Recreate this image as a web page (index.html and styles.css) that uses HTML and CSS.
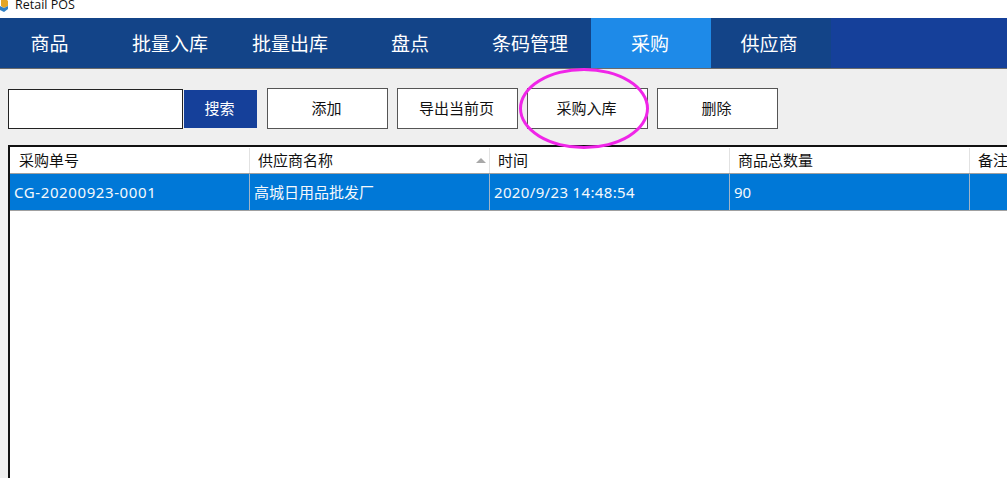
FILE: index.html
```html
<!DOCTYPE html>
<html lang="zh-CN">
<head>
<meta charset="utf-8">
<title>Retail POS</title>
<link rel="stylesheet" href="styles.css">
</head>
<body>
<div class="titlebar">
  <svg class="appicon" width="9" height="12" viewBox="0 0 9 12"><path d="M1 0h6l1 1v5l-4 2-3-2z" fill="#e3a526"/><path d="M0 6l4 2 4-2v3l-4 3-4-2z" fill="#2f7fc4"/></svg>
  <span class="apptitle">Retail POS</span>
</div>
<nav class="nav">
  <a class="tab tab-first">商品</a>
  <a class="tab">批量入库</a>
  <a class="tab">批量出库</a>
  <a class="tab">盘点</a>
  <a class="tab">条码管理</a>
  <a class="tab active">采购</a>
  <a class="tab">供应商</a>
</nav>
<main class="page">
  <div class="toolbar">
    <div class="search">
      <input class="search-input" type="text" aria-label="搜索">
      <button class="search-btn">搜索</button>
    </div>
    <button class="btn">添加</button>
    <button class="btn">导出当前页</button>
    <button class="btn">采购入库</button>
    <button class="btn">删除</button>
  </div>
  <div class="annotation"></div>
  <div class="table">
    <div class="row head">
      <div class="cell cell-first">采购单号</div>
      <div class="cell">供应商名称<span class="sort"></span></div>
      <div class="cell">时间</div>
      <div class="cell">商品总数量</div>
      <div class="cell">备注</div>
    </div>
    <div class="row selected">
      <div class="cell code">CG-20200923-0001</div>
      <div class="cell">高城日用品批发厂</div>
      <div class="cell time">2020/9/23 14:48:54</div>
      <div class="cell">90</div>
      <div class="cell"></div>
    </div>
  </div>
</main>
</body>
</html>
```
FILE: styles.css
```css
* { box-sizing: border-box; }
html, body { margin: 0; height: 100%; overflow: hidden; }
body {
  width: 1007px;
  height: 478px;
  display: flex;
  flex-direction: column;
  background: #efefef;
  font-family: "Noto Sans CJK SC", "Noto Sans", sans-serif;
  color: #111;
}
.titlebar {
  height: 18px;
  flex: none;
  background: #fff;
  display: flex;
  align-items: flex-start;
  overflow: hidden;
}
.appicon { flex: none; margin-right: 6px; }
.apptitle {
  font-family: "Open Sans", sans-serif;
  font-size: 12.5px;
  line-height: 12px;
  margin-top: -1px;
}
.nav {
  height: 51px;
  flex: none;
  display: flex;
  background: #15409a;
  border-bottom: 1px solid #6b6b6b;
}
.tab {
  width: 120px;
  height: 50px;
  padding-right: 2px;
  background: #134488;
  color: #fff;
  font-size: 19px;
  line-height: 50px;
  text-align: center;
}
.tab-first { width: 111px; padding-right: 12px; }
.tab:last-child { padding-right: 4px; }
.tab.active { background: #1e8ae8; }
.page {
  flex: 1;
  position: relative;
  padding: 19px 0 0 8px;
  display: flex;
  flex-direction: column;
  min-height: 0;
}
.toolbar { display: flex; align-items: flex-start; gap: 9px; height: 41px; }
.search { display: flex; align-items: center; height: 41px; margin-right: 1px; }
.search-input {
  width: 175px;
  height: 40px;
  border: 1px solid #222;
  background: #fff;
  border-radius: 0;
  padding: 0;
  outline: none;
}
.search-btn {
  width: 73px;
  height: 38px;
  margin-left: 1px;
  border: 0;
  background: #15409a;
  color: #fff;
  font: 15px/34px "Noto Sans CJK SC", sans-serif;
  padding: 0 2px 2px 0;
}
.btn {
  width: 121px;
  height: 41px;
  border: 1px solid #555;
  background: #fff;
  color: #111;
  font: 15px/35px "Noto Sans CJK SC", sans-serif;
  padding: 0 2px 2px 0;
}
.annotation {
  position: absolute;
  left: 519px;
  top: -1px;
  width: 130px;
  height: 81px;
  border: 3px solid #f025e8;
  border-radius: 50%;
  pointer-events: none;
}
.table {
  flex: 1;
  margin-top: 16px;
  background: #fff;
  border-top: 2px solid #111;
  border-left: 2px solid #111;
  overflow: hidden;
  font-family: "Noto Sans", "Noto Sans CJK SC", sans-serif;
  font-size: 15px;
}
.row { display: grid; grid-template-columns: 240px 240px 240px 240px 240px; }
.head { height: 27px; border-bottom: 1px solid #a0a0a0; padding-top: 1px; }
.head .cell {
  line-height: 24px;
  padding-left: 8px;
  border-right: 1px solid #e2e2e2;
  height: 25px;
  position: relative;
}
.head .cell-first { padding-left: 9px; }
.sort {
  position: absolute;
  right: 3px;
  top: 10px;
  border-left: 5px solid transparent;
  border-right: 5px solid transparent;
  border-bottom: 5px solid #a8a8a8;
}
.selected {
  height: 37px;
  background: #0078d7;
  color: #f4f8fc;
  border-bottom: 1px solid #a0a0a0;
}
.selected .cell {
  line-height: 36px;
  padding-left: 4px;
  border-right: 1px solid #9fb4c8;
}
.selected .code { letter-spacing: 0.6px; }
.selected .time { letter-spacing: 0.35px; }
```
